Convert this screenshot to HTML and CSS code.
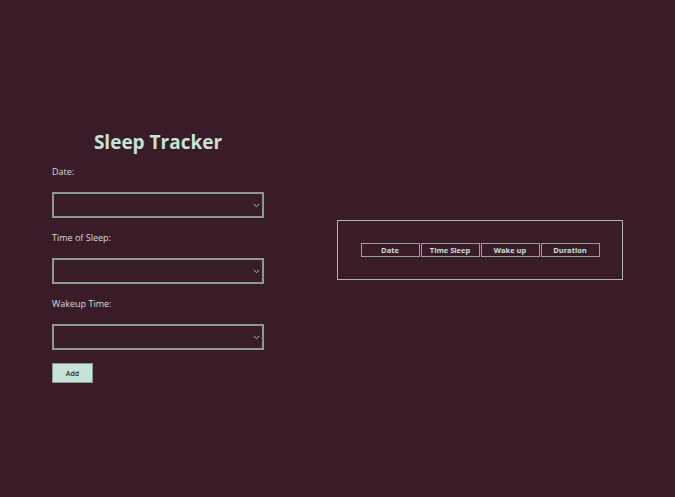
FILE: index.html
```html
<!DOCTYPE html>
<html>
<head>
<meta charset="utf-8">
<link rel="stylesheet" href="styles.css">
</head>
<body>
<main class="app">
  <section class="form-col">
    <h1 class="title">Sleep Tracker</h1>
    <label class="field-label">Date:</label>
    <div class="select"><span class="chev"><svg width="7" height="5" viewBox="0 0 7 5"><path d="M0.8 1 L3.5 3.7 L6.2 1" fill="none" stroke="#b8c4bf" stroke-width="1"/></svg></span></div>
    <label class="field-label">Time of Sleep:</label>
    <div class="select"><span class="chev"><svg width="7" height="5" viewBox="0 0 7 5"><path d="M0.8 1 L3.5 3.7 L6.2 1" fill="none" stroke="#b8c4bf" stroke-width="1"/></svg></span></div>
    <label class="field-label">Wakeup Time:</label>
    <div class="select"><span class="chev"><svg width="7" height="5" viewBox="0 0 7 5"><path d="M0.8 1 L3.5 3.7 L6.2 1" fill="none" stroke="#b8c4bf" stroke-width="1"/></svg></span></div>
    <button class="add">Add</button>
  </section>
  <section class="table-box">
    <div class="thead">
      <div class="th">Date</div>
      <div class="th">Time Sleep</div>
      <div class="th">Wake up</div>
      <div class="th">Duration</div>
    </div>
  </section>
</main>
</body>
</html>
```
FILE: styles.css
```css
html, body {
  margin: 0;
  padding: 0;
  background: #3a1c28;
  height: 100%;
}
body {
  font-family: "Open Sans", "DejaVu Sans", sans-serif;
  color: #c5e3d6;
}
.app {
  height: 497px;
  box-sizing: border-box;
  display: flex;
  align-items: flex-start;
  padding-left: 52px;
  gap: 73px;
}
.form-col {
  width: 212px;
  display: flex;
  flex-direction: column;
  margin-top: 130px;
}
.title {
  margin: 0 0 12px 0;
  text-align: center;
  font-size: 19px;
  font-weight: 700;
  line-height: 24px;
  color: #c5e3d6;
}
.field-label {
  font-size: 9px;
  line-height: 12px;
  color: #d2dcd8;
  margin-bottom: 14px;
}
.select {
  box-sizing: border-box;
  height: 26px;
  border: 2px solid #8c9894;
  display: flex;
  align-items: center;
  justify-content: flex-end;
  padding-right: 2px;
  margin-bottom: 14px;
}
.chev { display: flex; }
.add {
  align-self: flex-start;
  width: 41px;
  height: 20px;
  margin-top: -1px;
  border: 1px solid #8c9894;
  background: #c5e3d6;
  color: #3a1c28;
  font-family: inherit;
  font-size: 7px;
  font-weight: 600;
  padding: 0;
}
.table-box {
  box-sizing: border-box;
  width: 286px;
  height: 60px;
  margin-top: 220px;
  border: 1px solid #a8b4b0;
  display: flex;
  align-items: center;
  justify-content: center;
}
.thead {
  display: flex;
  gap: 1px;
}
.th {
  box-sizing: border-box;
  width: 59px;
  height: 14px;
  border: 1px solid #9aa19e;
  font-size: 7.5px;
  font-weight: 700;
  line-height: 12px;
  text-align: center;
  color: #c5e3d6;
}
```
